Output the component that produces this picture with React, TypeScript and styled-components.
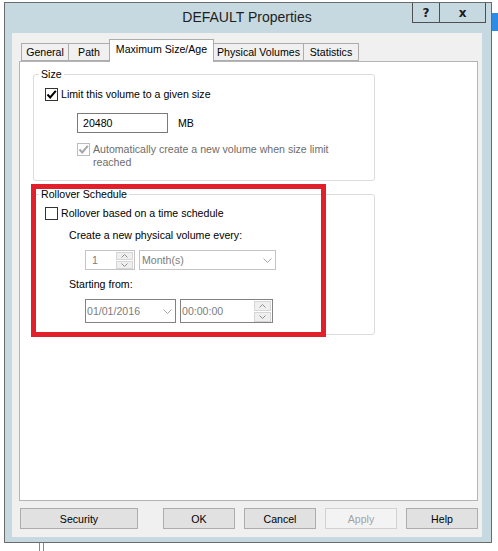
import React from 'react'
import styled, { createGlobalStyle } from 'styled-components'

const GlobalStyle = createGlobalStyle`
  html, body {
    margin: 0;
    padding: 0;
    background: #fff;
  }
  body {
    font-family: 'Liberation Sans', Arial, sans-serif;
    font-size: 10.6px;
    color: #000;
  }
  * {
    box-sizing: border-box;
  }
`

const Screen = styled.div`
  position: relative;
  width: 498px;
  height: 551px;
  overflow: hidden;
  padding: 2px 0 0 4px;
`

// bits of other windows peeking out behind the dialog
const BehindStrip = styled.div`
  position: absolute;
  right: 0;
  top: 13px;
  width: 6px;
  height: 18px;
  background: #2d8be6;
`
const BehindLines = styled.div`
  position: absolute;
  left: 39px;
  top: 543px;
  width: 5px;
  height: 8px;
  border-left: 1px solid #8a8a8a;
  border-right: 1px solid #8a8a8a;
`

const Window = styled.div`
  width: 488px;
  height: 541px;
  border: 1px solid #6b6b6b;
  background: #c6d9e0;
  display: flex;
  flex-direction: column;
  padding: 0 9px 5px 7px;
`

const TitleBar = styled.div`
  height: 30px;
  display: grid;
  grid-template-columns: 1fr auto 1fr;
  align-items: start;
`
const Title = styled.div`
  grid-column: 2;
  font-size: 14px;
  line-height: 28px;
  color: #1e1e1e;
`
const TitleButtons = styled.div`
  grid-column: 3;
  justify-self: end;
  display: flex;
  margin-right: -4px;
`
const TitleButton = styled.div<{ $w: number }>`
  width: ${(p) => p.$w}px;
  height: 20px;
  border: 1px solid #4f4f4f;
  border-top: 0;
  & + & {
    margin-left: -1px;
  }
  display: flex;
  align-items: center;
  justify-content: center;
  font-family: 'DejaVu Sans', sans-serif;
  font-weight: bold;
  font-size: 12px;
  color: #1a1a1a;
`

const Content = styled.div`
  flex: 1;
  background: #f0f0f0;
  display: flex;
  flex-direction: column;
  padding: 6px 4px 8px 7px;
`

const Tabs = styled.div`
  display: flex;
  align-items: flex-end;
  height: 22px;
  padding-left: 2px;
  position: relative;
  z-index: 1;
`
const Tab = styled.div<{ $w: number; $active?: boolean }>`
  width: ${(p) => p.$w}px;
  height: ${(p) => (p.$active ? 23 : 18)}px;
  margin-bottom: ${(p) => (p.$active ? -1 : 0)}px;
  border: 1px solid #acacac;
  border-bottom: ${(p) => (p.$active ? '0' : '1px solid #acacac')};
  background: ${(p) => (p.$active ? '#fff' : '#f0f0f0')};
  position: relative;
  z-index: ${(p) => (p.$active ? 2 : 1)};
  display: flex;
  align-items: ${(p) => (p.$active ? 'flex-start' : 'center')};
  padding-top: ${(p) => (p.$active ? 3 : 0)}px;
  justify-content: center;
  white-space: nowrap;
  & + & {
    margin-left: -1px;
  }
`

const Panel = styled.div`
  flex: 1;
  background: #fff;
  border: 1px solid #b4b4b4;
  padding: 6px 0 0 13px;
`

const Group = styled.fieldset`
  margin: 0;
  width: 342px;
  min-width: 0;
  border: 1px solid #dcdcdc;
  border-radius: 3px;
  padding: 0 0 11px 0;
`
const Legend = styled.legend`
  margin-left: 5px;
  padding: 0 2px;
  line-height: 13px;
`

const Row = styled.div<{ $indent: number; $top: number }>`
  display: flex;
  align-items: center;
  margin-top: ${(p) => p.$top}px;
  padding-left: ${(p) => p.$indent}px;
  line-height: 13px;
`
const TopRow = styled(Row)`
  align-items: flex-start;
`
const Label = styled.span<{ $disabled?: boolean }>`
  color: ${(p) => (p.$disabled ? '#6d6d6d' : '#000')};
  line-height: 13px;
`

const Box = styled.span<{ $disabled?: boolean }>`
  width: 13px;
  height: 13px;
  flex: none;
  border: 1px solid ${(p) => (p.$disabled ? '#bcbcbc' : '#333')};
  background: #fff;
  margin-right: 3px;
  display: flex;
  align-items: center;
  justify-content: center;
`

const TextBox = styled.div`
  width: 91px;
  height: 20px;
  border: 1px solid #7a7a7a;
  background: #fff;
  padding-left: 5px;
  display: flex;
  align-items: center;
`
const Unit = styled.span`
  margin-left: 10px;
`

const Field = styled.div<{ $w: number; $h: number; $dark?: boolean }>`
  width: ${(p) => p.$w}px;
  height: ${(p) => p.$h}px;
  border: 1px solid ${(p) => (p.$dark ? '#828282' : '#c4c4c4')};
  background: #fff;
  color: #7d7d7d;
  display: flex;
  align-items: center;
  padding-left: ${(p) => (p.$dark ? 1 : 2)}px;
  & + & {
    margin-left: 4px;
  }
`
const FieldText = styled.span<{ $pad?: number }>`
  flex: 1;
  padding-left: ${(p) => p.$pad || 0}px;
`
const Chevron = styled.span`
  width: 16px;
  display: flex;
  justify-content: center;
  align-items: center;
`
const Spin = styled.div`
  display: flex;
  flex-direction: column;
  gap: 1px;
  margin-right: 1px;
  align-self: center;
`
const SpinButton = styled.span<{ $h: number }>`
  width: 17px;
  height: ${(p) => p.$h}px;
  border: 1px solid #d6d6d6;
  background: #efefef;
  display: flex;
  align-items: center;
  justify-content: center;
`

const HighlightWrap = styled.div`
  position: relative;
  margin-top: 7px;
`
const Highlight = styled.div`
  position: absolute;
  left: -2px;
  top: -4px;
  width: 295px;
  height: 153px;
  border: 5px solid #e2202b;
  pointer-events: none;
`

const ButtonRow = styled.div`
  display: flex;
  margin-top: 7px;
  padding-left: 1px;
`
const ButtonGroup = styled.div`
  display: flex;
  gap: 9px;
  margin-left: auto;
`
const DialogButton = styled.div<{ $w: number; $disabled?: boolean }>`
  width: ${(p) => p.$w}px;
  height: 21px;
  border: 1px solid ${(p) => (p.$disabled ? '#d2d2d2' : '#adadad')};
  background: ${(p) => (p.$disabled ? '#f3f3f3' : '#e1e1e1')};
  color: ${(p) => (p.$disabled ? '#a3a3a3' : '#000')};
  display: flex;
  align-items: center;
  justify-content: center;
`

const CheckMark = ({ color }: { color: string }) => (
  <svg width='11' height='11' viewBox='0 0 11 11'>
    <path d='M1.5 5.5 L4.2 8.5 L9.8 1.8' fill='none' stroke={color} strokeWidth='2' />
  </svg>
)

const Down = () => (
  <svg width='9' height='5' viewBox='0 0 9 5'>
    <polyline points='0.5,0.5 4.5,4.5 8.5,0.5' fill='none' stroke='#a8a8a8' strokeWidth='1' />
  </svg>
)

const Arrow = ({ up }: { up?: boolean }) => (
  <svg width='7' height='4' viewBox='0 0 7 4'>
    <polyline
      points={up ? '0.5,3.5 3.5,0.5 6.5,3.5' : '0.5,0.5 3.5,3.5 6.5,0.5'}
      fill='none'
      stroke='#8e8e8e'
      strokeWidth='1'
    />
  </svg>
)

const Spinner = ({ h }: { h: number }) => (
  <Spin>
    <SpinButton $h={h}>
      <Arrow up />
    </SpinButton>
    <SpinButton $h={h}>
      <Arrow />
    </SpinButton>
  </Spin>
)

const tabs = [
  { label: 'General', w: 48 },
  { label: 'Path', w: 42 },
  { label: 'Maximum Size/Age', w: 105, active: true },
  { label: 'Physical Volumes', w: 91 },
  { label: 'Statistics', w: 56 },
]

const App = () => {
  return (
    <Screen>
      <GlobalStyle />
      <BehindStrip />
      <BehindLines />
      <Window>
        <TitleBar>
          <Title>DEFAULT Properties</Title>
          <TitleButtons>
            <TitleButton $w={28}>?</TitleButton>
            <TitleButton $w={47}>x</TitleButton>
          </TitleButtons>
        </TitleBar>

        <Content>
          <Tabs>
            {tabs.map((t) => (
              <Tab key={t.label} $w={t.w} $active={t.active}>
                {t.label}
              </Tab>
            ))}
          </Tabs>

          <Panel>
            <Group>
              <Legend>Size</Legend>
              <Row $indent={11} $top={7}>
                <Box>
                  <CheckMark color='#000' />
                </Box>
                <Label>Limit this volume to a given size</Label>
              </Row>
              <Row $indent={43} $top={12}>
                <TextBox>20480</TextBox>
                <Unit>MB</Unit>
              </Row>
              <TopRow $indent={43} $top={10}>
                <Box $disabled>
                  <CheckMark color='#a6a6a6' />
                </Box>
                <Label $disabled>
                  Automatically create a new volume when size limit
                  <br />
                  reached
                </Label>
              </TopRow>
            </Group>

            <HighlightWrap>
              <Group>
                <Legend>Rollover Schedule</Legend>
                <Row $indent={11} $top={6}>
                  <Box />
                  <Label>Rollover based on a time schedule</Label>
                </Row>
                <Row $indent={35} $top={9}>
                  <Label>Create a new physical volume every:</Label>
                </Row>
                <Row $indent={51} $top={8}>
                  <Field $w={50} $h={20}>
                    <FieldText $pad={4}>1</FieldText>
                    <Spinner h={8} />
                  </Field>
                  <Field $w={137} $h={20}>
                    <FieldText>Month(s)</FieldText>
                    <Chevron>
                      <Down />
                    </Chevron>
                  </Field>
                </Row>
                <Row $indent={35} $top={8}>
                  <Label>Starting from:</Label>
                </Row>
                <Row $indent={51} $top={8}>
                  <Field $w={91} $h={24} $dark>
                    <FieldText>01/01/2016</FieldText>
                    <Chevron>
                      <Down />
                    </Chevron>
                  </Field>
                  <Field $w={93} $h={24} $dark>
                    <FieldText>00:00:00</FieldText>
                    <Spinner h={10} />
                  </Field>
                </Row>
              </Group>
              <Highlight />
            </HighlightWrap>
          </Panel>

          <ButtonRow>
            <DialogButton $w={118}>Security</DialogButton>
            <ButtonGroup>
              <DialogButton $w={72}>OK</DialogButton>
              <DialogButton $w={72}>Cancel</DialogButton>
              <DialogButton $w={72} $disabled>
                Apply
              </DialogButton>
              <DialogButton $w={72}>Help</DialogButton>
            </ButtonGroup>
          </ButtonRow>
        </Content>
      </Window>
    </Screen>
  )
}

export default App
